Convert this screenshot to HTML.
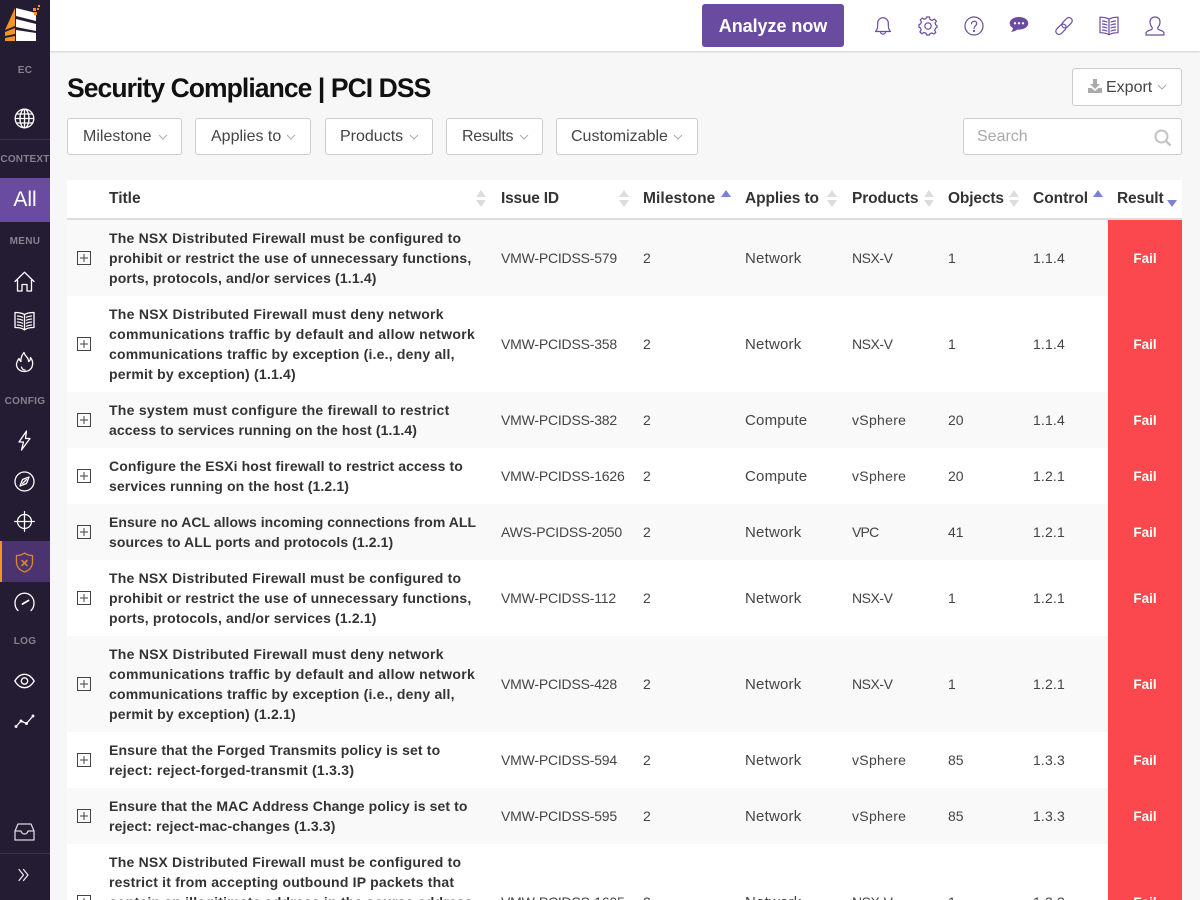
<!DOCTYPE html>
<html><head><meta charset="utf-8"><title>Security Compliance | PCI DSS</title>
<style>
*{box-sizing:border-box}
html,body{margin:0;padding:0;width:1200px;height:900px;overflow:hidden;background:#f7f7f7;font-family:"Liberation Sans",sans-serif;color:#333}
#page{position:absolute;left:0;top:0;width:1200px;height:900px;overflow:hidden;background:#f7f7f7}
.abs{position:absolute}
#side{position:absolute;left:0;top:0;width:50px;height:900px;background:#231c33}
.lbl{position:absolute;left:0;width:50px;text-align:center;font-size:10px;font-weight:bold;color:#85818e;line-height:12px;letter-spacing:.3px}
.ic{position:absolute;fill:none;stroke:#fff;stroke-width:1.3;stroke-linecap:round;stroke-linejoin:round}
.tp{position:absolute;fill:none;stroke:#694ba0;stroke-width:1.2;stroke-linecap:round;stroke-linejoin:round}
#top{position:absolute;left:50px;top:0;width:1150px;height:51px;background:#fff;box-shadow:0 1px 2px rgba(0,0,0,.16)}
#an{position:absolute;left:702px;top:4px;width:142px;height:43px;background:#694ba0;border-radius:3px;color:#fff;font-weight:bold;font-size:18px;line-height:44px;text-align:center;letter-spacing:-.05px}
h1{position:absolute;left:67px;top:70px;margin:0;font-size:26.5px;line-height:36px;font-weight:bold;color:#111;letter-spacing:-.93px;white-space:nowrap}
.btn{position:absolute;background:#fff;border:1px solid #ccc;border-radius:3px;font-size:16px;color:#444;line-height:35px;white-space:nowrap}
.btn span{position:absolute;top:0}
.ch{position:absolute;fill:none;stroke:#aaa;stroke-width:1}
.hd{position:absolute;left:67px;top:180px;width:1115px;height:40px;background:#fff;border-bottom:2px solid #ddd}
.h{position:absolute;top:190px;font-size:15.5px;line-height:18px;color:#333;font-weight:bold;white-space:nowrap}
.s{position:absolute;width:0;height:0;border-left:5px solid transparent;border-right:5px solid transparent}
.u{border-bottom:7px solid #ddd}.d{border-top:7px solid #ddd}
.ua{border-bottom:7px solid #7a80dc}.da{border-top:7px solid #7a80dc}
.r{position:absolute;left:67px;width:1115px;font-size:14px;color:#444;white-space:nowrap;overflow:hidden}
.r.g{background:#f9f9f9}.r.w{background:#fff}
.r div{position:absolute;top:0;height:100%;display:flex;align-items:center;line-height:20px}
.r .t{left:42px;font-weight:bold;color:#333;letter-spacing:.2px}
.r .a{left:434px;letter-spacing:-.2px}.r .b{left:576px}.r .c{left:678px;top:1px;font-size:15px;letter-spacing:.2px}.r .e{left:785px}.r .f{left:881px}.r .k{left:966px;letter-spacing:.15px}
.r .x{left:1041px;width:74px;background:#fa484e;color:#fff;justify-content:center;font-weight:bold;font-size:13.5px;padding-top:1px}
.r svg{position:absolute;left:10px;top:50%;margin-top:-7px}
.n{letter-spacing:-.45px}.vs{letter-spacing:.3px}.vp{letter-spacing:-.8px}
.last div{height:116px}
.last svg{top:58px}
</style></head><body>
<div id="page">

<div id="top"></div>
<div id="side"></div>

<svg class="abs" style="left:0;top:0" width="50" height="50" viewBox="0 0 50 50">
<path d="M5 30 15 8V26L5 30ZM5 32 15 28V34L5 36ZM5 38 15 36V41H5Z" fill="#f7941d"/>
<path d="M16 8 36 13V21L16 16ZM16 19 36 24V31L16 27ZM16 30 36 33V41H16Z" fill="#fff"/>
<path d="M33 8h3v3h-3zM37 8h2v2h-2zM34 12h3v3h-3zM38 5h2v2h-2z" fill="#f7941d"/>
</svg>

<div class="lbl" style="top:65px">EC</div>
<svg class="ic" style="left:14px;top:108px" width="21" height="21" viewBox="0 0 21 21"><circle cx="10.5" cy="10.5" r="9.3"/><ellipse cx="10.5" cy="10.5" rx="4.5" ry="9.3"/><path d="M10.5 1.2V19.8M1.2 10.5H19.800M2.500 6H18.500M2.500 15H18.500"/></svg>
<div class="abs" style="left:0;top:139px;width:50px;height:1px;background:#3a3349"></div>
<div class="lbl" style="top:154px;letter-spacing:.2px">CONTEXT</div>
<div class="abs" style="left:0;top:178px;width:50px;height:44px;background:#694ba0;color:#fff;font-size:21px;line-height:44px;text-align:center">All</div>
<div class="lbl" style="top:236px">MENU</div>
<svg class="ic" style="left:14px;top:271px" width="21" height="21" viewBox="0 0 21 21"><path d="M1 10.500 10.500 1.200 20 10.500M3.500 9V20H8V13.500H13V20H17.500V9"/></svg>
<svg class="ic" style="left:14px;top:311px" width="21" height="20" viewBox="0 0 21 20"><path d="M10.500 3.500C8 2 4.500 1.500 1 1.500V16.500C4.500 16.500 8 17 10.500 18.800 13 17 16.500 16.500 20 16.500V1.500C16.500 1.500 13 2 10.500 3.500ZM10.500 3.500V18.800M3.500 5C5 5 7 5.500 8.500 6.200M3.500 8C5 8 7 8.500 8.500 9.200M3.500 11C5 11 7 11.500 8.500 12.200M3.500 14C5 14 7 14.500 8.500 15.200M17.500 5C16 5 14 5.500 12.500 6.200M17.500 8C16 8 14 8.500 12.500 9.200M17.500 11C16 11 14 11.500 12.500 12.200M17.500 14C16 14 14 14.500 12.500 15.200"/></svg>
<svg class="ic" style="left:15px;top:351px" width="19" height="22" viewBox="0 0 19 22"><path d="M9 1.500C10 6 14 6 13.500 10.500 15 10 15.500 8.500 15.500 6.500 17.500 9 18 11.500 17.500 14 17 18 13.500 20.500 9.500 20.500 5 20.500 1.500 17.500 1.500 13.500 1.500 11 3 9 4 7.500 4.500 9 5 10 6 10.500 5.500 7 7 4 9 1.500Z"/><path d="M6.500 16C7 18 8.500 19 10 19"/></svg>
<div class="lbl" style="top:396px">CONFIG</div>
<svg class="ic" style="left:17px;top:430px" width="15" height="21" viewBox="0 0 15 21"><path d="M9.500 1 2 12H6.500L4.500 20 13 8.500H8.500L9.500 1Z"/></svg>
<svg class="ic" style="left:14px;top:471px" width="21" height="21" viewBox="0 0 21 21"><circle cx="10.500" cy="10.500" r="9.500"/><path d="M15 6 12.500 12.500 6 15 8.500 8.500Z"/><path d="M8.500 12.500 12.500 8.500"/></svg>
<svg class="ic" style="left:14px;top:511px" width="21" height="21" viewBox="0 0 21 21"><circle cx="10.500" cy="10.500" r="7"/><path d="M10.500 .7V20.300M.7 10.500H20.300"/></svg>
<div class="abs" style="left:0;top:541px;width:50px;height:41px;background:#4b3370"></div>
<div class="abs" style="left:0;top:541px;width:2px;height:41px;background:#f7941d"></div>
<svg class="ic" style="left:15px;top:552px;stroke:#d9882a" width="19" height="21" viewBox="0 0 19 21"><path d="M9.500 1C7 3 4 3.500 1.500 3.500V10C1.500 15 5 18.500 9.500 20 14 18.500 17.500 15 17.500 10V3.500C15 3.500 12 3 9.500 1Z"/><path d="M7 8.500 12 13.500M12 8.500 7 13.500" stroke-width="1.600"/></svg>
<svg class="ic" style="left:14px;top:592px" width="21" height="20" viewBox="0 0 21 20"><path d="M4 18.500C2 16.800 1 14 1 11 1 5.500 5.200 1.200 10.500 1.200S20 5.500 20 11C20 14 19 16.800 17 18.500"/><path d="M8.500 12 14.500 8.500" stroke-width="1.800"/></svg>
<div class="lbl" style="top:636px">LOG</div>
<svg class="ic" style="left:14px;top:673px" width="21" height="16" viewBox="0 0 21 16"><path d="M.8 8C3.500 3.500 6.800 1.300 10.500 1.300S17.500 3.500 20.200 8C17.500 12.500 14.200 14.700 10.500 14.700S3.500 12.500 .8 8Z"/><circle cx="10.500" cy="8" r="3.200"/></svg>
<svg class="ic" style="left:14px;top:713px" width="21" height="16" viewBox="0 0 21 16"><path d="M2 13.500 7 8 12.500 10.500 19 3"/><circle cx="2" cy="13.500" r=".8" fill="#fff"/><circle cx="7" cy="8" r=".8" fill="#fff"/><circle cx="12.500" cy="10.500" r=".8" fill="#fff"/><circle cx="19" cy="3" r=".8" fill="#fff"/></svg>
<svg class="ic" style="left:14px;top:823px;stroke:#d8d6dc" width="21" height="18" viewBox="0 0 21 18"><path d="M4 1H17L20 8V17H1V8ZM1 8H7C7.500 10 8.500 11 10.500 11S13.500 10 14 8H20"/></svg>
<div class="abs" style="left:0;top:853px;width:50px;height:1px;background:#3a3349"></div>
<svg class="ic" style="left:18px;top:868px;stroke:#e8e6ec" width="11" height="14" viewBox="0 0 11 14"><path d="M1 1.500 5.500 7 1 12.500M5.500 1.500 10 7 5.500 12.500"/></svg>

<div id="an">Analyze now</div>
<svg class="tp" style="left:874px;top:16px" width="18" height="20" viewBox="0 0 18 20"><path d="M1.500 15.500C3.200 14 3.700 12 3.700 9V7A5.300 5.300 0 0 1 14.300 7V9C14.300 12 14.800 14 16.500 15.500ZM6.500 15.500C6.500 19 11.500 19 11.500 15.500"/></svg>
<svg class="tp" style="left:918px;top:16px" width="20" height="20" viewBox="0 0 20 20"><circle cx="10" cy="10" r="3.200"/><path d="M8.500 1H11.500L12 3.400 14.300 4.400 16.400 3 18.400 5.200 17 7.200 17.800 9 19 9.500V11.500L17.500 12.300 16.700 14.500 17.800 16.500 15.800 18 14 17 12 17.600 11.500 19H8.500L8 17.200 5.800 16.500 3.800 17.800 1.900 15.800 3.200 13.800 2.400 11.800 1 11.300V8.500L2.700 7.900 3.400 5.700 2.200 3.900 4.200 2 6 3.300 8 2.700Z"/></svg>
<svg class="tp" style="left:964px;top:16px" width="20" height="20" viewBox="0 0 20 20"><circle cx="10" cy="10" r="9"/><path d="M7.500 7.700C7.500 4.500 12.800 4.500 12.800 7.500 12.800 9.800 10 9.700 10 12.200"/><circle cx="10" cy="15" r=".5"/></svg>
<svg class="abs" style="left:1009px;top:16px" width="20" height="18" viewBox="0 0 20 18"><path d="M10 1C4.800 1 .7 3.700 .7 7.300 .7 9.300 2 11 4 12.100 3.800 13.600 3 15 2.300 16 4.800 15.700 7 14.700 8.300 13.500 8.900 13.600 9.400 13.600 10 13.600 15.200 13.600 19.300 10.900 19.300 7.300S15.200 1 10 1Z" fill="#694ba0"/><circle cx="6" cy="7.300" r="1.200" fill="#fff"/><circle cx="10" cy="7.300" r="1.200" fill="#fff"/><circle cx="14" cy="7.300" r="1.200" fill="#fff"/></svg>
<svg class="tp" style="left:1054px;top:16px" width="20" height="20" viewBox="0 0 20 20"><rect x="1" y="10" width="12" height="6.500" rx="3.250" transform="rotate(-45 7 13.250)"/><rect x="7" y="3.500" width="12" height="6.500" rx="3.250" transform="rotate(-45 13 6.750)"/></svg>
<svg class="tp" style="left:1099px;top:16px" width="20" height="20" viewBox="0 0 20 20"><path d="M10 3.200C7.500 1.700 4 1.200 1 1.200V16.700C4 16.700 7.500 17.200 10 18.800 12.500 17.200 16 16.700 19 16.700V1.200C16 1.200 12.500 1.700 10 3.200ZM10 3.200V18.800M3.500 5C5 5 6.500 5.400 8 6M3.500 8C5 8 6.500 8.400 8 9M3.500 11C5 11 6.500 11.400 8 12M3.500 14C5 14 6.500 14.400 8 15M16.500 5C15 5 13.500 5.400 12 6M16.500 8C15 8 13.500 8.400 12 9M16.500 11C15 11 13.500 11.400 12 12M16.500 14C15 14 13.500 14.400 12 15"/></svg>
<svg class="tp" style="left:1145px;top:16px" width="20" height="20" viewBox="0 0 20 20"><path d="M1 19V17.300C1 15 4.500 14.500 6.500 13.500 7.500 13 7.500 11.800 6.800 11 5.500 9.500 5 7.500 5 5.800 5 3 7 1 10 1S15 3 15 5.800C15 7.500 14.500 9.500 13.200 11 12.500 11.800 12.500 13 13.500 13.500 15.500 14.500 19 15 19 17.300V19Z"/></svg>

<h1>Security Compliance | PCI DSS</h1>

<div class="btn" style="left:1072px;top:68px;width:110px;height:38px;line-height:37px"><span style="left:33px">Export</span>
<svg class="abs" style="left:15px;top:10px" width="14" height="14" viewBox="0 0 14 14"><path d="M5 0H9V5H12L7 10 2 5H5ZM0 9H3.500L7 12 10.500 9H14V14H0Z" fill="#aaa"/></svg>
<svg class="ch" style="left:84px;top:15px" width="10" height="6" viewBox="0 0 10 6"><path d="M1 1 5 5 9 1"/></svg></div>

<div class="btn" style="left:67px;top:118px;width:115px;height:37px"><span style="left:15px">Milestone</span><svg class="ch" style="left:90px;top:15px" width="10" height="6" viewBox="0 0 10 6"><path d="M1 1 5 5 9 1"/></svg></div>
<div class="btn" style="left:195px;top:118px;width:116px;height:37px"><span style="left:15px">Applies to</span><svg class="ch" style="left:90px;top:15px" width="10" height="6" viewBox="0 0 10 6"><path d="M1 1 5 5 9 1"/></svg></div>
<div class="btn" style="left:325px;top:118px;width:108px;height:37px"><span style="left:14px">Products</span><svg class="ch" style="left:83px;top:15px" width="10" height="6" viewBox="0 0 10 6"><path d="M1 1 5 5 9 1"/></svg></div>
<div class="btn" style="left:446px;top:118px;width:97px;height:37px"><span style="left:15px;letter-spacing:-.3px">Results</span><svg class="ch" style="left:72px;top:15px" width="10" height="6" viewBox="0 0 10 6"><path d="M1 1 5 5 9 1"/></svg></div>
<div class="btn" style="left:556px;top:118px;width:142px;height:37px"><span style="left:14px">Customizable</span><svg class="ch" style="left:116px;top:15px" width="10" height="6" viewBox="0 0 10 6"><path d="M1 1 5 5 9 1"/></svg></div>
<div class="btn" style="left:963px;top:118px;width:219px;height:37px;color:#aaa"><span style="left:13px">Search</span>
<svg class="abs" style="left:190px;top:10px;fill:none;stroke:#c4c4c4;stroke-width:2" width="18" height="18" viewBox="0 0 18 18"><circle cx="7.500" cy="7.500" r="6"/><path d="M12 12 16.500 16.500" stroke-width="2.500"/></svg></div>

<div class="hd"></div>
<div class="h" style="left:109px">Title</div>
<div class="h" style="left:501px;letter-spacing:-.2px">Issue ID</div>
<div class="h" style="left:643px;letter-spacing:.1px">Milestone</div>
<div class="h" style="left:745px;letter-spacing:-.1px">Applies to</div>
<div class="h" style="left:852px;letter-spacing:-.1px">Products</div>
<div class="h" style="left:948px;letter-spacing:-.15px">Objects</div>
<div class="h" style="left:1033px">Control</div>
<div class="h" style="left:1117px;letter-spacing:-.15px">Result</div>
<i class="s u" style="left:476px;top:190px"></i><i class="s d" style="left:476px;top:200px"></i>
<i class="s u" style="left:619px;top:190px"></i><i class="s d" style="left:619px;top:200px"></i>
<i class="s ua" style="left:721px;top:190px"></i>
<i class="s u" style="left:827px;top:190px"></i><i class="s d" style="left:827px;top:200px"></i>
<i class="s u" style="left:924px;top:190px"></i><i class="s d" style="left:924px;top:200px"></i>
<i class="s u" style="left:1009px;top:190px"></i><i class="s d" style="left:1009px;top:200px"></i>
<i class="s ua" style="left:1093px;top:190px"></i>
<i class="s da" style="left:1167px;top:200px"></i>

<div class="r g" style="top:220px;height:76px"><svg width="14" height="14" viewBox="0 0 14 14"><path d="M.5.500H13.500V13.500H.5ZM3 7H11M7 3V11" fill="none" stroke="#444"/></svg><div class="t"><span>The NSX Distributed Firewall must be configured to<br>prohibit or restrict the use of unnecessary functions,<br><span style="letter-spacing:.15px">ports, protocols, and/or services (1.1.4)</span></span></div><div class="a">VMW-PCIDSS-579</div><div class="b">2</div><div class="c">Network</div><div class="e n">NSX-V</div><div class="f">1</div><div class="k">1.1.4</div><div class="x">Fail</div></div>

<div class="r w" style="top:296px;height:96px"><svg width="14" height="14" viewBox="0 0 14 14"><path d="M.5.500H13.500V13.500H.5ZM3 7H11M7 3V11" fill="none" stroke="#444"/></svg><div class="t"><span><span style="letter-spacing:.26px">The NSX Distributed Firewall must deny network</span><br><span style="letter-spacing:.33px">communications traffic by default and allow network</span><br>communications traffic by exception (i.e., deny all,<br>permit by exception) (1.1.4)</span></div><div class="a">VMW-PCIDSS-358</div><div class="b">2</div><div class="c">Network</div><div class="e n">NSX-V</div><div class="f">1</div><div class="k">1.1.4</div><div class="x">Fail</div></div>

<div class="r g" style="top:392px;height:56px"><svg width="14" height="14" viewBox="0 0 14 14"><path d="M.5.500H13.500V13.500H.5ZM3 7H11M7 3V11" fill="none" stroke="#444"/></svg><div class="t"><span><span style="letter-spacing:.26px">The system must configure the firewall to restrict</span><br><span style="letter-spacing:.1px">access to services running on the host (1.1.4)</span></span></div><div class="a">VMW-PCIDSS-382</div><div class="b">2</div><div class="c">Compute</div><div class="e vs">vSphere</div><div class="f">20</div><div class="k">1.1.4</div><div class="x">Fail</div></div>

<div class="r w" style="top:448px;height:56px"><svg width="14" height="14" viewBox="0 0 14 14"><path d="M.5.500H13.500V13.500H.5ZM3 7H11M7 3V11" fill="none" stroke="#444"/></svg><div class="t"><span><span style="letter-spacing:.1px">Configure the ESXi host firewall to restrict access to</span><br><span style="letter-spacing:.12px">services running on the host (1.2.1)</span></span></div><div class="a">VMW-PCIDSS-1626</div><div class="b">2</div><div class="c">Compute</div><div class="e vs">vSphere</div><div class="f">20</div><div class="k">1.2.1</div><div class="x">Fail</div></div>

<div class="r g" style="top:504px;height:56px"><svg width="14" height="14" viewBox="0 0 14 14"><path d="M.5.500H13.500V13.500H.5ZM3 7H11M7 3V11" fill="none" stroke="#444"/></svg><div class="t"><span><span style="letter-spacing:.04px">Ensure no ACL allows incoming connections from ALL</span><br><span style="letter-spacing:.08px">sources to ALL ports and protocols (1.2.1)</span></span></div><div class="a">AWS-PCIDSS-2050</div><div class="b">2</div><div class="c">Network</div><div class="e vp">VPC</div><div class="f">41</div><div class="k">1.2.1</div><div class="x">Fail</div></div>

<div class="r w" style="top:560px;height:76px"><svg width="14" height="14" viewBox="0 0 14 14"><path d="M.5.500H13.500V13.500H.5ZM3 7H11M7 3V11" fill="none" stroke="#444"/></svg><div class="t"><span>The NSX Distributed Firewall must be configured to<br>prohibit or restrict the use of unnecessary functions,<br><span style="letter-spacing:.15px">ports, protocols, and/or services (1.2.1)</span></span></div><div class="a">VMW-PCIDSS-112</div><div class="b">2</div><div class="c">Network</div><div class="e n">NSX-V</div><div class="f">1</div><div class="k">1.2.1</div><div class="x">Fail</div></div>

<div class="r g" style="top:636px;height:96px"><svg width="14" height="14" viewBox="0 0 14 14"><path d="M.5.500H13.500V13.500H.5ZM3 7H11M7 3V11" fill="none" stroke="#444"/></svg><div class="t"><span><span style="letter-spacing:.26px">The NSX Distributed Firewall must deny network</span><br><span style="letter-spacing:.33px">communications traffic by default and allow network</span><br>communications traffic by exception (i.e., deny all,<br>permit by exception) (1.2.1)</span></div><div class="a">VMW-PCIDSS-428</div><div class="b">2</div><div class="c">Network</div><div class="e n">NSX-V</div><div class="f">1</div><div class="k">1.2.1</div><div class="x">Fail</div></div>

<div class="r w" style="top:732px;height:56px"><svg width="14" height="14" viewBox="0 0 14 14"><path d="M.5.500H13.500V13.500H.5ZM3 7H11M7 3V11" fill="none" stroke="#444"/></svg><div class="t"><span><span style="letter-spacing:.14px">Ensure that the Forged Transmits policy is set to</span><br><span style="letter-spacing:.25px">reject: reject-forged-transmit (1.3.3)</span></span></div><div class="a">VMW-PCIDSS-594</div><div class="b">2</div><div class="c">Network</div><div class="e vs">vSphere</div><div class="f">85</div><div class="k">1.3.3</div><div class="x">Fail</div></div>

<div class="r g" style="top:788px;height:56px"><svg width="14" height="14" viewBox="0 0 14 14"><path d="M.5.500H13.500V13.500H.5ZM3 7H11M7 3V11" fill="none" stroke="#444"/></svg><div class="t"><span><span style="letter-spacing:.1px">Ensure that the MAC Address Change policy is set to</span><br><span style="letter-spacing:.14px">reject: reject-mac-changes (1.3.3)</span></span></div><div class="a">VMW-PCIDSS-595</div><div class="b">2</div><div class="c">Network</div><div class="e vs">vSphere</div><div class="f">85</div><div class="k">1.3.3</div><div class="x">Fail</div></div>

<div class="r w last" style="top:844px;height:56px"><svg width="14" height="14" viewBox="0 0 14 14"><path d="M.5.500H13.500V13.500H.5ZM3 7H11M7 3V11" fill="none" stroke="#444"/></svg><div class="t"><span>The NSX Distributed Firewall must be configured to<br>restrict it from accepting outbound IP packets that<br>contain an illegitimate address in the source address<br>field via egress filtering<br>(1.3.3)</span></div><div class="a">VMW-PCIDSS-1605</div><div class="b">2</div><div class="c">Network</div><div class="e n">NSX-V</div><div class="f">1</div><div class="k">1.3.3</div><div class="x">Fail</div></div>

</div>
</body></html>
